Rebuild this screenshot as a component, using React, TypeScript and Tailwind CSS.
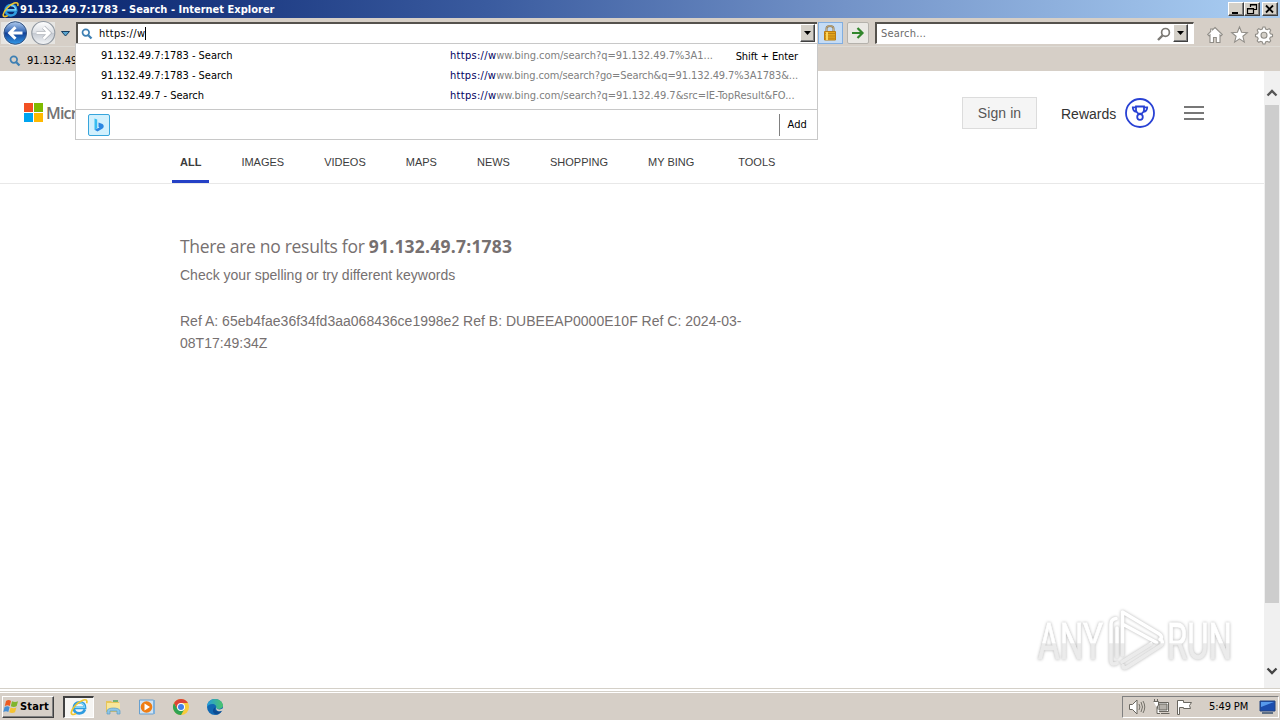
import React from "react";

const ui = "font-['DejaVu_Sans_Condensed','DejaVu_Sans',sans-serif] [font-stretch:condensed]";

const IeLogo = ({ size }: { size: number }) => (
  <svg width={size} height={size} viewBox="0 0 20 20" fill="none" className="shrink-0">
    <path d="M16.5 12.8C15.4 15.7 13 17 10.3 17 6.5 17 4.2 14.4 4.2 11S6.7 4.8 10.5 4.8c3.9 0 6.2 2.5 6.2 6.2H5.6" stroke="#2f9ce0" strokeWidth="3" />
    <path d="M5 10.5h11.2C15.8 7.5 13.8 5.4 10.5 5.4" stroke="#7fd6f8" strokeWidth="1.3" />
    <path d="M18.5 5.8c1-3.1-.6-4.7-4.1-3.4C8.7 4.4 2.4 11.2 1.5 15.8c-.6 3 2.3 3.2 5.3 1.5" stroke="#f0c62d" strokeWidth="1.8" />
  </svg>
);

const Mag = () => (
  <svg width="12" height="12" viewBox="0 0 12 12" fill="none" stroke="#3d7fb3" className="shrink-0">
    <circle cx="4.8" cy="4.6" r="3.3" strokeWidth="1.7" />
    <path d="m7.3 7.2 3.2 3.4" strokeWidth="2.2" />
  </svg>
);

const DropButton = () => (
  <div className="flex h-[18px] w-[15px] shrink-0 items-center justify-center border border-t-white border-l-white border-r-[#404040] border-b-[#404040] bg-[#d4d0c8] shadow-[inset_-1px_-1px_#808080]">
    <svg width="7" height="4"><path d="M0 0h7L3.5 4Z" fill="#000" /></svg>
  </div>
);

const captionGlyphs = [
  <path key="min" d="M2 9h6v2H2Z" fill="#000" />,
  <path key="restore" d="M4.5 4V1.5h6v5H8M4 2h7M1.5 5.5h6v5h-6ZM1 6h7" fill="none" stroke="#000" strokeWidth="1.2" />,
  <path key="close" d="m2 2.5 7 7M9 2.5l-7 7" stroke="#000" strokeWidth="1.8" />,
];

function TitleBar() {
  return (
    <div className="flex h-[18px] items-center bg-[linear-gradient(90deg,#0a246a_0%,#14317a_12%,#3a5b9f_38%,#7393c8_66%,#a6caf0_97%)] pl-[2px] pr-[2px]">
      <IeLogo size={17} />
      <span className={`${ui} ml-[1px] pt-px text-[11px] font-bold leading-[18px] tracking-[0.01px] whitespace-nowrap text-white`}>
        91.132.49.7:1783 - Search - Internet Explorer
      </span>
      <div className="ml-auto flex">
        {captionGlyphs.map((g, i) => (
          <div key={i} className={`flex h-[14px] w-[16px] items-center justify-center border border-t-white border-l-white border-r-[#404040] border-b-[#404040] bg-[#d4d0c8] shadow-[inset_-1px_-1px_#808080] ${i === 2 ? "ml-[2px]" : ""}`}>
            <svg width="12" height="12" viewBox="0 0 12 12">{g}</svg>
          </div>
        ))}
      </div>
    </div>
  );
}

function NavButtons() {
  return (
    <svg width="74" height="28" viewBox="0 0 74 28" className="shrink-0">
      <defs>
        <linearGradient id="back" x2="0" y2="1">
          <stop stopColor="#b9d2f2" /><stop offset=".45" stopColor="#3568b5" /><stop offset=".5" stopColor="#123f96" /><stop offset="1" stopColor="#35a0ee" />
        </linearGradient>
        <linearGradient id="fwd" x2="0" y2="1">
          <stop stopColor="#fff" /><stop offset=".48" stopColor="#dcdfe4" /><stop offset=".5" stopColor="#c3c8d0" /><stop offset="1" stopColor="#f4f6f8" />
        </linearGradient>
      </defs>
      <path d="M1 4h54v22H1Z" fill="#e6e5e2" />
      <circle cx="15.3" cy="15" r="12" fill="url(#back)" stroke="#eceff3" strokeWidth="1.6" />
      <circle cx="15.3" cy="15" r="11.3" fill="none" stroke="#36547f" />
      <path d="M22.5 15H10m5.5-5.7L9.7 15l5.8 5.7" fill="none" stroke="#fff" strokeWidth="3" />
      <circle cx="43.3" cy="15" r="11.5" fill="url(#fwd)" stroke="#8f969f" strokeWidth="1.1" />
      <path d="M36.5 15H49m-5.5-5.7 5.8 5.7-5.8 5.7" fill="none" stroke="#aeb2b9" strokeWidth="4" />
      <path d="M36.5 15H49m-5.5-5.7 5.8 5.7-5.8 5.7" fill="none" stroke="#fff" strokeWidth="2.6" />
      <path d="M61.5 13.5h8l-4 4.5Z" fill="#5aa5cf" stroke="#173e60" />
    </svg>
  );
}

function Toolbar() {
  return (
    <div className="flex h-[28px] items-start bg-[#d6cfc7]">
      <NavButtons />
      <div className="mt-[4px] ml-[2px] flex h-[22px] w-[741px] items-center border-t-2 border-l-2 border-[#55524d] border-b border-b-[#d4d0c8] bg-white pl-[3px] pr-[2px]">
        <Mag />
        <span className={`${ui} ml-[6px] pt-px text-[11px] leading-[18px] tracking-[0.3px] whitespace-nowrap`}>https://w</span>
        <span className="h-[13px] w-px bg-black" />
        <span className="-mt-px ml-auto"><DropButton /></span>
      </div>
      <div className="mt-[4px] ml-[1px] flex h-[22px] w-[25px] items-center justify-center border border-[#82aee0] bg-[#c5dcf5]">
        <svg width="14" height="17" viewBox="0 0 14 17" className="-mt-px -ml-[2px]">
          <path d="M3.500 8V4.500C3.500 1 10.500 1 10.500 4.500V8" fill="none" stroke="#8d7752" strokeWidth="2" />
          <path d="M3.500 8V4.500C3.500 1 10.500 1 10.500 4.500V8" fill="none" stroke="#d5c195" strokeWidth=".8" />
          <path d="M1.500 7.500h11v8.500h-11Z" fill="#e4a51c" stroke="#ba7c12" />
          <path d="M2 9.500h10M2 12h10M2 14.200h10" stroke="#bd8115" />
          <path d="M4 8v8" stroke="#fbd55c" strokeWidth="2" />
        </svg>
      </div>
      <div className="mt-[4px] ml-[4px] flex h-[22px] w-[22px] items-center justify-center rounded-[2px] border border-[#b5b2ac] bg-[#eae8e4]">
        <svg width="14" height="14" viewBox="0 0 14 14" fill="none" stroke="#32862c" strokeWidth="2.2"><path d="M1 7h10M6.5 2l5 5-5 5" /></svg>
      </div>
      <div className="mt-[4px] ml-[6px] flex h-[22px] w-[319px] items-center border-t-2 border-l-2 border-[#55524d] border-r border-r-white border-b border-b-white bg-white pl-[4px] pr-[5px]">
        <span className={`${ui} pt-px text-[11px] leading-[18px] tracking-[0.2px] text-[#6b6b6b]`}>Search...</span>
        <svg width="14" height="14" viewBox="0 0 14 14" className="mr-[2px] ml-auto" fill="none" stroke="#7b7974"><circle cx="8.5" cy="5.400" r="3.900" strokeWidth="1.7" /><path d="m5.500 8.500-4.500 4.500" strokeWidth="2.400" /></svg>
        <span className="-mt-px"><DropButton /></span>
      </div>
      <svg width="70" height="20" viewBox="0 0 70 20" className="mt-[7px] ml-[12px]" fill="#fff" stroke="#908d87" strokeWidth="1.1">
        <path d="m9 2.500 7.300 7-1.300 1.300-1-.8v7.500h-3.700v-5H7.500v5H4V10l-1 .8-1.300-1.300 3-3V4h2v.7Z" />
        <path d="m33.500 2 2.100 5.300 5.700.4-4.400 3.600 1.400 5.800-4.800-3.200-4.900 3.200 1.500-5.800-4.400-3.600 5.700-.4Z" />
        <g transform="translate(2.200 0)">
          <path d="m56.800 2 .6 2 1.600.7 2-1 1.500 1.500-1 2 .7 1.600 2.100.7v2l-2.100.7-.7 1.600 1 2-1.500 1.500-2-1-1.600.7-.6 2h-2l-.7-2-1.600-.7-2 1-1.500-1.500 1-2-.7-1.600-2-.7v-2l2-.7.7-1.600-1-2 1.500-1.500 2 1 1.600-.7.7-2Z" />
          <circle cx="55.800" cy="10.200" r="3" fill="#d4d0c8" />
        </g>
      </svg>
    </div>
  );
}

const suggestions = [
  { title: "91.132.49.7:1783 - Search", rest: "ww.bing.com/search?q=91.132.49.7%3A1...", cls: "tracking-[-0.04px]", hint: "Shift + Enter" },
  { title: "91.132.49.7:1783 - Search", rest: "ww.bing.com/search?go=Search&q=91.132.49.7%3A1783&...", cls: "tracking-[-0.1px]", hint: "" },
  { title: "91.132.49.7 - Search", rest: "ww.bing.com/search?q=91.132.49.7&src=IE-TopResult&FO...", cls: "tracking-[-0.02px]", hint: "" },
];

function Suggestions() {
  return (
    <div className={`${ui} absolute top-[43px] left-[75px] flex h-[97px] w-[743px] flex-col border border-[#c8c8c8] bg-white text-[11px] text-black`}>
      <div className="flex h-[65px] flex-col pt-[2px]">
        {suggestions.map((s, i) => (
          <div key={i} className="flex h-[20px] items-center whitespace-nowrap">
            <span className="w-[374px] pl-[25px] tracking-[-0.03px]">{s.title}</span>
            <span className={`text-[#808080] ${s.cls}`}><span className="tracking-[0.3px] text-[#000060]">https://w</span>{s.rest}</span>
            <span className="mr-[19px] ml-auto pt-[2px] tracking-[-0.1px]">{s.hint}</span>
          </div>
        ))}
      </div>
      <div className="flex h-[30px] items-center border-t border-[#c8c8c8] pl-[12px]">
        <div className="flex h-[22px] w-[22px] items-center justify-center rounded-[2px] border border-[#37a5dc] bg-[#d1f0fd]">
          <svg width="12" height="14" viewBox="0 0 12 14"><path d="m1.500.5 2.700 1v8.800l-2.700 1.500Z" fill="#37bdf0" /><path d="m5.500 4.500 4 1.600c1.600 1.200 1.700 3.400.1 4.500l-5.100 3-3-1.800 5-2.300-1-.8Z" fill="#2a86e2" /></svg>
        </div>
        <div className="mr-[10px] ml-auto flex h-[22px] items-center border-l border-[#808080] pt-[2px] pl-[8px] tracking-[0.1px]">Add</div>
      </div>
    </div>
  );
}

const tabs = [
  ["ALL", "font-bold"], ["IMAGES", ""], ["VIDEOS", ""], ["MAPS", ""],
  ["NEWS", ""], ["SHOPPING", ""], ["MY BING", ""], ["TOOLS", "ml-[4px]"],
];

function BingPage() {
  return (
    <main className="h-full w-[1264px] bg-white font-['Liberation_Sans',Arial,sans-serif]">
      <header className="flex h-[83px] items-center pl-[24px]">
        <div className="grid grid-cols-2 gap-px">
          <i className="h-[9px] w-[9px] bg-[#f25022]" /><i className="h-[9px] w-[9px] bg-[#7fba00]" />
          <i className="h-[9px] w-[9px] bg-[#00a4ef]" /><i className="h-[9px] w-[9px] bg-[#ffb900]" />
        </div>
        <span className="ml-[3px] w-[81px] overflow-hidden font-['Open_Sans',sans-serif] text-[16px] font-semibold tracking-[-0.8px] text-[#737373]">Microsoft</span>
        <div className="ml-[835px] flex h-[32px] w-[75px] items-center justify-center border border-[#dcdcdc] bg-[#f5f5f5] pt-px text-[14px] tracking-[0.1px] text-[#555]">Sign in</div>
        <span className="mt-[3px] ml-[24px] w-[64px] text-[14px] text-[#333]">Rewards</span>
        <svg width="30" height="30" viewBox="0 0 30 30" fill="none" stroke="#2841d4" strokeWidth="1.8">
          <circle cx="15" cy="15" r="14" />
          <path d="M11 8.5h8v3.800c0 1.500-1 2.500-2.400 3.400h-3.200C12 14.800 11 13.800 11 12.300ZM11 9.300H7.800c0 2.700 1 4.300 3.600 4.600M19 9.300h3.200c0 2.700-1 4.300-3.600 4.600" />
          <circle cx="15" cy="19" r="2.800" />
        </svg>
        <div className="ml-[29px] flex w-[20px] flex-col gap-[4px]">
          <i className="h-[2px] bg-[#777]" /><i className="h-[2px] bg-[#777]" /><i className="h-[2px] bg-[#777]" />
        </div>
      </header>
      <nav className="flex h-[30px] gap-[40px] border-b border-[#e8e8e8] pl-[180px] text-[11px] leading-[16px] text-[#3c3c3c]">
        {tabs.map(([label, cls], i) => (
          <div key={label} className={`flex h-[29px] shrink-0 flex-col justify-between ${cls}`}>
            <span>{label}</span>
            {i === 0 && <span className="-mx-[8px] h-[3px] bg-[#2541c6]" />}
          </div>
        ))}
      </nav>
      <section className="w-[790px] pt-[48px] pl-[180px] text-[#767070]">
        <h1 className="font-['Open_Sans','Noto_Sans',sans-serif] text-[17.5px] leading-[28px] tracking-[-0.31px] whitespace-nowrap">
          There are no results for <b className="tracking-[0.22px]">91.132.49.7:1783</b>
        </h1>
        <p className="mt-[4px] text-[14px] leading-[22px]">Check your spelling or try different keywords</p>
        <p className="mt-[24px] text-[14px] leading-[22px] tracking-[0.013px] whitespace-nowrap">
          Ref A: 65eb4fae36f34fd3aa068436ce1998e2 Ref B: DUBEEAP0000E10F Ref C: 2024-03-<br />08T17:49:34Z
        </p>
      </section>
    </main>
  );
}

function Scrollbar() {
  return (
    <div className="flex w-[16px] flex-col items-center bg-[#f0f0f0]">
      <div className="flex h-[34px] items-end pb-[8px]">
        <svg width="12" height="8" fill="none" stroke="#555" strokeWidth="2.3"><path d="m1.500 6.500 4.500-4.500 4.500 4.500" /></svg>
      </div>
      <div className="h-[498px] w-[14px] bg-[#cdcdcd]" />
      <div className="mt-auto pb-[13px]">
        <svg width="12" height="8" fill="none" stroke="#444" strokeWidth="2.3"><path d="m1.500 1.500 4.500 4.500 4.500-4.500" /></svg>
      </div>
    </div>
  );
}

function Watermark() {
  return (
    <svg width="210" height="80" viewBox="0 0 210 80" className="absolute top-[600px] left-[1030px] drop-shadow-[0_0_1.5px_rgba(0,0,0,0.3)]">
      <defs>
        <linearGradient id="wm" gradientUnits="userSpaceOnUse" x1="0" y1="8" x2="0" y2="72">
          <stop offset=".54" stopColor="#fff" /><stop offset=".56" stopColor="#ebebeb" />
        </linearGradient>
      </defs>
      <g fill="url(#wm)" stroke="url(#wm)" strokeWidth=".8" fontFamily="Roboto, sans-serif" fontSize="50">
        <text x="8" y="58.500" textLength="65" lengthAdjust="spacingAndGlyphs">ANY</text>
        <text x="137" y="58.500" textLength="65" lengthAdjust="spacingAndGlyphs">RUN</text>
      </g>
      <g fill="none" stroke="url(#wm)" strokeWidth="3.600" strokeLinecap="round" strokeLinejoin="round">
        <path d="M86 18.500c-4 .5-5 2.500-5 5.500v36c0 4 2.500 5 6 3M87 28v29" />
        <path d="M92.500 55V12l36 21.500c3 2 4 4 1.500 6M92.500 24l34 18.500" />
        <path d="M132 41c1 2 0 4-2 5L98 66.500c-3 2-5 2-5-1M92 62l29-18" />
      </g>
    </svg>
  );
}

const Flag = () => (
  <svg width="17" height="17" viewBox="0 0 17 17">
    <path d="M3 3c2-1.500 4-1 5 0L6.800 8c-1.500-1-3-1-5 0Z" fill="#ec5b22" />
    <path d="M9 3.300c2 1 4 1 6 0L13.700 8c-2 1.300-4 1-5.900.3Z" fill="#80b52f" />
    <path d="M1.600 9c2-1 3.500-1 5 0l-1.300 5c-1.500-1-3-1-5 0Z" fill="#458fd5" />
    <path d="M7.600 9.400c2 1 4 1 5.800 0L12 14.300c-2 1-4 1-5.700 0Z" fill="#f5c332" />
  </svg>
);

function Taskbar() {
  return (
    <footer className={`${ui} flex h-[28px] items-center border-t border-white bg-[#d6cfc7] text-[11px]`}>
      <div className="ml-[2px] flex h-[22px] w-[52px] items-center border border-t-white border-l-white border-r-[#404040] border-b-[#404040] shadow-[inset_-1px_-1px_#808080]">
        <Flag />
        <b className="pt-[2px] tracking-[0.15px]">Start</b>
      </div>
      <div className="ml-[9px] flex h-[22px] w-[31px] items-center justify-center border-t-2 border-l-2 border-r border-b border-t-[#404040] border-l-[#404040] border-r-white border-b-white bg-[#f6f5f3]">
        <IeLogo size={18} />
      </div>
      <svg width="18" height="18" viewBox="0 0 18 18" className="ml-[10px]">
        <path d="M2 3h5l1 1h7v10H2Z" fill="#e6c55a" /><path d="M3 5h13v7H3Z" fill="#f8e69b" />
        <path d="M9 3h5" stroke="#52a85b" strokeWidth="1.5" />
        <path d="M3 16v-3c0-4 13-4 13 0v3h-3v-3H6v3Z" fill="#8ec6e7" stroke="#5d9bc4" strokeWidth=".7" />
      </svg>
      <svg width="18" height="18" viewBox="0 0 18 18" className="ml-[16px]">
        <path d="M1.500 2h14v14h-14Z" fill="#cfe3f4" stroke="#68a0cf" /><path d="M15 2h2v14h-2Z" fill="#7db0dc" />
        <circle cx="8.500" cy="9" r="5.800" fill="#ef7d13" /><path d="m6.500 5.500 5.500 3.500-5.500 3.500Z" fill="#fff" />
      </svg>
      <svg width="18" height="18" viewBox="0 0 18 18" className="ml-[16px]">
        <circle cx="9" cy="9" r="8" fill="#f8cb3b" />
        <path d="M2.070 5A8 8 0 0 0 9 17l3.500-6H5.500Z" fill="#30a353" />
        <path d="M2.070 5A8 8 0 0 1 15.930 5H9L5.500 11Z" fill="#dc4337" />
        <circle cx="9" cy="9" r="4" fill="#fff" /><circle cx="9" cy="9" r="3" fill="#437fe8" />
      </svg>
      <svg width="18" height="18" viewBox="0 0 18 18" className="ml-[16px]">
        <defs><linearGradient id="edge"><stop stopColor="#259cde" /><stop offset="1" stopColor="#4bc56a" /></linearGradient></defs>
        <circle cx="9" cy="9" r="8" fill="#1168b2" />
        <path d="M1 9C1 4 4.500 1 9 1s8 3 8 6.800c0 3-5 4-7 2.200 1-2-1-4-3.500-4C3.500 6 1.500 7.500 1 9Z" fill="url(#edge)" />
        <path d="M9.500 9c-2 4 2.500 5.500 6.500 3.500-1 2-3.500 4-5.500 4-4-1-5-5-1-7.500Z" fill="#0c4b91" />
        <path d="M10.300 9.500c.5 2.500 4 2.600 7 .5v2.300c-4 2.200-8 .7-7-2.800Z" fill="#d4d0c8" />
      </svg>
      <div className="mr-[1px] ml-auto flex h-[22px] w-[157px] items-center border border-t-[#808080] border-l-[#808080] border-r-white border-b-white pl-[5px]">
        <svg width="68" height="18" viewBox="0 0 68 18" fill="#fff" stroke="#69665f">
          <path d="M1.500 6.500h3L9 2v14l-4.500-4.500h-3Z" /><path d="M11 6q1.800 3 0 6M13 4q3 5 0 10M15 3q3.500 6 0 12" fill="none" strokeWidth=".9" />
          <path d="M29.500 4.500h11v9h-11ZM33 15.500h8.500" /><path d="M31 6h8v6h-8Z" fill="#b4b0a9" /><path d="M25.500 3.500h5v4l-1.500 1v7h3M26.500 1v2M29.500 1v2" />
          <path d="M49.500 16.500v-14h6v2h8l-2 3 1 3h-7v-1h-4v7Z" />
        </svg>
        <span className="ml-[13px] pt-[2px] whitespace-nowrap tracking-[-0.1px]">5:49 PM</span>
        <svg width="17" height="16" viewBox="0 0 17 16" className="ml-[11px]"><path d="M1 2h15v10H1Z" fill="#1c4dae" stroke="#25457f" /><path d="M2 3h13L2 8Z" fill="#5799ec" /><path d="M3 14h11" stroke="#37506f" strokeWidth="1.500" /></svg>
      </div>
    </footer>
  );
}

export default function App() {
  return (
    <div className="relative flex h-[720px] w-[1280px] flex-col overflow-hidden bg-[#d6cfc7]">
      <TitleBar />
      <Toolbar />
      <div className="flex h-[25px] items-center border-t border-[#dedbd5] bg-[#d6cfc7] pt-[3px] pl-[9px]">
        <Mag />
        <span className={`${ui} ml-[6px] w-[48px] overflow-hidden pt-px text-[11px] whitespace-nowrap`}>91.132.49.7:1783 - Search</span>
      </div>
      <div className="flex h-[617px]">
        <BingPage />
        <Scrollbar />
      </div>
      <div className="h-[4px] border-t border-b border-[#d4d0c8] bg-white" />
      <Taskbar />
      <Suggestions />
      <Watermark />
    </div>
  );
}
